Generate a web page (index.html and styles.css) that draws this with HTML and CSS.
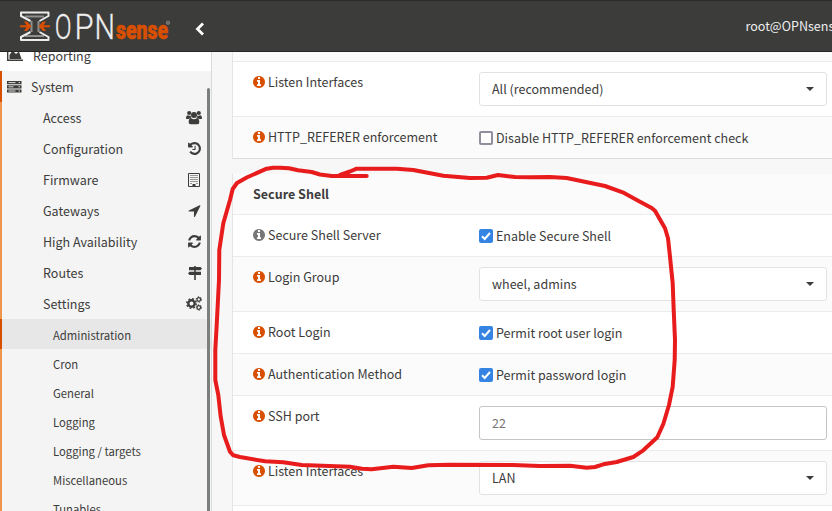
FILE: index.html
```html
<!DOCTYPE html>
<html lang="en">
<head>
<meta charset="utf-8">
<title>OPNsense</title>
<link rel="stylesheet" href="styles.css">
</head>
<body>
<svg class="defs" width="0" height="0">
  <symbol id="info" viewBox="0 0 1792 1792"><path d="M1152 1376v-160q0-14-9-23t-23-9h-96v-512q0-14-9-23t-23-9h-320q-14 0-23 9t-9 23v160q0 14 9 23t23 9h96v320h-96q-14 0-23 9t-9 23v160q0 14 9 23t23 9h448q14 0 23-9t9-23zm-128-896v-192q0-14-9-23t-23-9h-192q-14 0-23 9t-9 23v192q0 14 9 23t23 9h192q14 0 23-9t9-23zm640 416q0 209-103 385.500t-279.500 279.500-385.500 103-385.500-103-279.500-279.500-103-385.500 103-385.500 279.500-279.500 385.500-103 385.500 103 279.500 279.500 103 385.500z"/></symbol>
</svg>
<header class="topbar">
  <svg class="logo" width="160" height="40" viewBox="16 6 160 40">
    <path fill="none" stroke="#8f8f8f" stroke-width="2" d="M25 16.500H44M25 36H44M31.500 21V32M38.500 21V32"/>
    <path fill="none" stroke="#ececec" stroke-width="2" stroke-linejoin="round" d="M30.500 21 21 16V12.500H48.500V16L39.500 21M30.500 32 21 37V40H48.500V37L39.500 32"/>
    <path fill="#d94f00" d="M20 25.200h6.500l-2.500-3.700h3l4.500 4.700-4.500 4.700h-3l2.500-3.700H20zM50 25.200h-6.500l2.500-3.700h-3l-4.500 4.700 4.500 4.700h3l-2.500-3.700H50z"/>
    <text class="logo-opn" transform="translate(54.700 38.800) scale(.69 1)">O</text>
    <text class="logo-opn" transform="translate(74.500 38.800) scale(.86 1)">P</text>
    <text class="logo-opn" transform="translate(94.500 38.800) scale(.8 1)">N</text>
    <text class="logo-sense" x="116" y="38.500" textLength="52" lengthAdjust="spacingAndGlyphs">sense</text>
    <circle cx="168" cy="22.700" r="1.700" fill="#666" stroke="#888" stroke-width=".8"/>
  </svg>
  <svg class="collapse" width="10" height="14" viewBox="0 0 10 14"><path d="M8 1.500 2.500 7 8 12.500" fill="none" stroke="#fff" stroke-width="2.800"/></svg>
  <span class="user">root@OPNsense.localdomain</span>
</header>
<div class="body">
  <nav class="sidebar">
    <div class="top reporting">
      <svg width="17" height="14" viewBox="0 0 17 14"><path d="M.7 0v12.300H16" fill="none" stroke="#3c3c3b" stroke-width="1.400"/><path fill="#3c3c3b" d="M2.500 11V7L5.500 2.500 9 6l3-2.500L14.500 11z"/></svg>
      <span>Reporting</span>
    </div>
    <div class="top system">
      <svg width="15" height="12" viewBox="0 0 15 12"><path fill="#3c3c3b" d="M0 0h14.500v3.200H0zM0 4.200h14.500v3.200H0zM0 8.400h14.500v3.200H0z"/><path stroke="#eee" stroke-width=".9" d="M1.500 1.600h7M1.500 5.800h5M1.500 10h7M11.500 1.600h1.500M11.500 5.800h1.500M11.500 10h1.500"/></svg>
      <span>System</span>
    </div>
    <div class="submenu">
      <a class="item">Access<svg width="16" height="15" viewBox="0 0 16 15"><circle cx="3.200" cy="3" r="2.100"/><circle cx="12.800" cy="3" r="2.100"/><path d="M0 8.500C0 6 .8 5.200 2 5.200c1.500.9 2 .5 2.700.3.100 1 .3 1.700.8 2.200C4.500 7.700 3.500 8 3 9H1.200Q0 9 0 8.500zM16 8.500c0-2.500-.8-3.300-2-3.300-1.500.9-2 .5-2.700.3-.1 1-.3 1.700-.8 2.200 1 0 2 .3 2.500 1.300h1.800q1.200 0 1.200-.5z"/><circle cx="8" cy="5.100" r="3"/><path d="M2.700 12.200C2.700 9.500 3.500 8 5 8c2 1.600 4 1.600 6 0 1.500 0 2.300 1.500 2.300 4.200 0 1.200-.8 2-2 2H4.700c-1.200 0-2-.8-2-2z"/></svg></a>
      <a class="item">Configuration<svg width="15" height="15" viewBox="0 0 1792 1792"><path d="M1664 896q0 156-61 298t-164 245-245 164-298 61q-172 0-327-72.500t-264-204.500q-7-10-6.500-22.500t8.500-20.500l137-138q10-9 25-9 16 2 23 12 73 95 179 147t225 52q104 0 198.500-40.500t163.500-109.500 109.500-163.500 40.500-198.500-40.500-198.500-109.500-163.500-163.500-109.500-198.500-40.500q-98 0-188 35.500t-160 101.500l137 138q31 30 14 69-17 40-59 40h-448q-26 0-45-19t-19-45v-448q0-42 40-59 39-17 69 14l130 129q107-101 244.500-156.500t284.500-55.500q156 0 298 61t245 164 164 245 61 298zm-640-288v448q0 14-9 23t-23 9h-320q-14 0-23-9t-9-23v-64q0-14 9-23t23-9h224v-352q0-14 9-23t23-9h64q14 0 23 9t9 23z"/></svg></a>
      <a class="item">Firmware<svg class="narrow" width="12" height="14" viewBox="0 0 12 14"><path fill="none" stroke="#3c3c3b" d="M.5.500h11v13H.5z"/><path fill="none" stroke="#3c3c3b" stroke-dasharray="1 1" d="M2.500 2.500h7M2.500 4.500h7M2.500 6.500h7M2.500 8.500h7M2.500 10.500h1M8.500 10.500h1"/><path d="M4.500 11h3v2.500h-3z"/></svg></a>
      <a class="item">Gateways<svg width="15" height="15" viewBox="0 0 1792 1792"><path d="M1593 349l-640 1280q-17 35-57 35-5 0-15-2-22-5-35.500-22.500t-13.500-39.500v-576h-576q-22 0-39.500-13.500t-22.500-35.500 4-42 29-30l1280-640q13-7 29-7 27 0 45 19 15 14 18.500 34.500t-6.500 39.500z"/></svg></a>
      <a class="item">High Availability<svg width="15" height="15" viewBox="0 0 1792 1792"><path d="M1639 1056q0 5-1 7-64 268-268 434.500t-478 166.500q-146 0-282.500-55t-243.500-157l-129 129q-19 19-45 19t-45-19-19-45v-448q0-26 19-45t45-19h448q26 0 45 19t19 45-19 45l-137 137q71 66 161 102t187 36q134 0 250-65t186-179q11-17 53-117 8-23 30-23h192q13 0 22.500 9.500t9.500 22.500zm25-800v448q0 26-19 45t-45 19h-448q-26 0-45-19t-19-45 19-45l138-138q-148-137-349-137-134 0-250 65t-186 179q-11 17-53 117-8 23-30 23h-199q-13 0-22.500-9.500t-9.500-22.500v-7q65-268 270-434.500t480-166.500q146 0 284 55.500t245 156.500l130-129q19-19 45-19t45 19 19 45z"/></svg></a>
      <a class="item">Routes<svg width="14" height="14" viewBox="0 0 14 14"><path d="M6.200 0h1.600v1H12.500L14 2.500 12.500 4.200H1V1h5.200zM6.200 4.200h1.600V5.700H13V9H1.500L0 7.300 1.500 5.700h4.700zM6.200 9h1.600v5H6.200z"/></svg></a>
      <a class="item">Settings<svg width="16" height="15" viewBox="0 0 16 15"><g fill="none" stroke="#3c3c3b"><circle cx="5.500" cy="7.500" r="3.200" stroke-width="2.400"/><circle cx="5.500" cy="7.500" r="4.800" stroke-width="1.400" stroke-dasharray="1.900 1.870"/><circle cx="12.800" cy="3.500" r="1.800" stroke-width="1.300"/><circle cx="12.800" cy="3.500" r="2.700" stroke-width="1" stroke-dasharray="1.400 1.430"/><circle cx="12.800" cy="11.500" r="1.800" stroke-width="1.300"/><circle cx="12.800" cy="11.500" r="2.700" stroke-width="1" stroke-dasharray="1.400 1.430"/></g></svg></a>
      <a class="leaf active">Administration</a>
      <a class="leaf">Cron</a>
      <a class="leaf">General</a>
      <a class="leaf">Logging</a>
      <a class="leaf">Logging / targets</a>
      <a class="leaf">Miscellaneous</a>
      <a class="leaf">Tunables</a>
    </div>
    <div class="scroll-thumb"></div>
  </nav>
  <main class="content">
    <section class="panel first">
      <div class="row sliver"></div>
      <div class="row tall"><div class="label"><svg class="info"><use href="#info"/></svg>Listen Interfaces</div><div class="select">All (recommended)</div></div>
      <div class="row alt"><div class="label"><svg class="info"><use href="#info"/></svg>HTTP_REFERER enforcement</div><label class="check"><span class="box"></span>Disable HTTP_REFERER enforcement check</label></div>
    </section>
    <section class="panel">
      <div class="row alt head">Secure Shell</div>
      <div class="row"><div class="label"><svg class="info muted"><use href="#info"/></svg>Secure Shell Server</div><label class="check"><span class="box on"><svg viewBox="0 0 14 14"><path d="M3 7.300 5.700 10 11 4"/></svg></span>Enable Secure Shell</label></div>
      <div class="row alt tall"><div class="label"><svg class="info"><use href="#info"/></svg>Login Group</div><div class="select">wheel, admins</div></div>
      <div class="row"><div class="label"><svg class="info"><use href="#info"/></svg>Root Login</div><label class="check"><span class="box on"><svg viewBox="0 0 14 14"><path d="M3 7.300 5.700 10 11 4"/></svg></span>Permit root user login</label></div>
      <div class="row alt"><div class="label"><svg class="info"><use href="#info"/></svg>Authentication Method</div><label class="check"><span class="box on"><svg viewBox="0 0 14 14"><path d="M3 7.300 5.700 10 11 4"/></svg></span>Permit password login</label></div>
      <div class="row tall"><div class="label"><svg class="info"><use href="#info"/></svg>SSH port</div><div class="field">22</div></div>
      <div class="row alt tall"><div class="label"><svg class="info"><use href="#info"/></svg>Listen Interfaces</div><div class="select">LAN</div></div>
      <div class="row tall"></div>
    </section>
  </main>
</div>
<svg class="marker" width="832" height="511" viewBox="0 0 832 511"><path d="M366.700 176H331.700L320 174.500 311.700 172 298 170.300 289 168.300 280 167.700 273 167.700 266.700 168.700 246.700 177.500 237 183 232.700 189 230 200 223.300 223.300 219.300 250 219 280 216.700 325 215.300 350V380L218.300 395 220.700 416.700 224 435 230 451.700 233.300 455.300 240 457 265 461.300 283.300 462.300 301.700 465 350 466.700 362 468.700 371.700 469.300 393.300 466.700 411.700 468 428.300 465.300 450 464.700 513 465 540 466 570 465.700 586.700 467.700 595 467 603.300 464.300 616.700 462 633.300 457 643.300 450.300 657.300 437.300 663.300 424 669 405 672.700 386.700 674.700 360 675 340 673.700 310 672.700 283.300 670 256.700 668 238.300 665 228.300 655 210.700 651.700 208 640 201.700 622.700 192.300 605 186 566.700 178 550 177 530 177.300 515 177 498 175 486.700 177.700 470 178 443.300 175.700 413.300 170 396.700 168.700H356.700L350 171.500 340 175"/></svg>
</body>
</html>
```
FILE: styles.css
```css
* { box-sizing: border-box; }
body {
  margin: 0;
  height: 511px;
  overflow: hidden;
  background: #f7f7f7;
  color: #3c3c3b;
  font: 12.52px/20px "Source Sans Pro", "Noto Sans CJK SC", sans-serif;
}
.defs { position: absolute; }
.topbar {
  display: flex;
  align-items: center;
  height: 52px;
  padding-left: 16px;
  overflow: hidden;
  background: #3c3c3b;
  border-top: 1px solid #2b2b2b;
  border-bottom: 1px solid #262626;
}
.logo { flex: none; overflow: visible; }
.logo-opn { font: 300 36px Roboto, sans-serif; fill: #eee; stroke: #eee; stroke-width: .3; }
.logo-sense { font: 900 25px Roboto, sans-serif; fill: #d94f00; stroke: #d94f00; stroke-width: .6; }
.collapse { flex: none; margin: 6px 0 0 19px; }
.user { margin-left: auto; width: 86.500px; white-space: nowrap; color: #eee; }
.body { display: flex; height: 459px; }
.sidebar {
  position: relative;
  flex: none;
  width: 212px;
  overflow: hidden;
  background: #f4f4f4;
  border-right: 1px solid #d9d9d9;
}
.top { display: flex; align-items: center; }
.reporting { height: 19px; padding-left: 7px; gap: 9px; background: #fff; align-items: flex-end; }
.reporting svg { margin-bottom: 9px; }
.reporting span { margin-bottom: 5px; }
.system { height: 31px; padding-left: 5px; gap: 9px; border-left: 2px solid #d94f00; }
.submenu { border-left: 2px solid #ee944d; }
.item { display: flex; align-items: center; justify-content: space-between; height: 31px; padding: 0 9px 0 41px; }
.item svg { fill: #3c3c3b; }
.item .narrow { margin-right: 2px; }
.leaf { display: block; height: 29px; padding: 1px 0 0 51px; font-size: 11.300px; line-height: 28px; }
.leaf.active { height: 30px; line-height: 30px; margin-left: -2px; border-left: 2px solid #d94f00; background: #e7e7e7; }
.scroll-thumb { position: absolute; top: 36px; right: 1px; width: 3px; height: 430px; border-radius: 2px 2px 0 0; background: #7c807d; }
.content { flex: 1; padding-left: 20px; overflow: hidden; }
.panel { border-left: 1px solid #e5e5e5; background: #fff; }
.panel.first { margin-bottom: 15px; }
.panel.first .row:last-child { border-bottom-color: #ddd; }
.row { display: flex; height: 42px; padding: 10px 5px 0 20px; border-bottom: 1px solid #ebebeb; white-space: nowrap; }
.row.tall { height: 55px; }
.row.alt { background: #fbfbfb; }
.row.head { height: 41px; font-weight: bold; }
.row.sliver { height: 10px; background: #fbfbfb; padding: 0; }
.label { flex: none; display: flex; align-items: center; width: 226px; height: 20px; }
.info { flex: none; width: 14px; height: 14px; margin-right: 2px; margin-left: -1px; fill: #d94f00; }
.info.muted { fill: #777; }
.check { display: flex; align-items: center; height: 22px; }
.box { width: 14px; height: 14px; margin-right: 3px; border: 2px solid #8f8f9d; border-radius: 2px; background: #fff; }
.box.on { border: 0; background: #3584e4; }
.box svg { display: block; fill: none; stroke: #fff; stroke-width: 2; }
.select, .field { display: flex; align-items: center; flex: 1; height: 34px; padding: 0 12px; border: 1px solid #e2e2e2; border-radius: 3px; background: #fff; }
.select { justify-content: space-between; }
.select::after { content: ""; border: 4px solid transparent; border-top-color: #3c3c3b; border-bottom: 0; }
.field { border-color: #c4c4c4; color: #757575; }
.marker { position: absolute; left: 0; top: 0; fill: none; stroke: #e81c1c; stroke-width: 4; stroke-linecap: round; stroke-linejoin: round; }
```
